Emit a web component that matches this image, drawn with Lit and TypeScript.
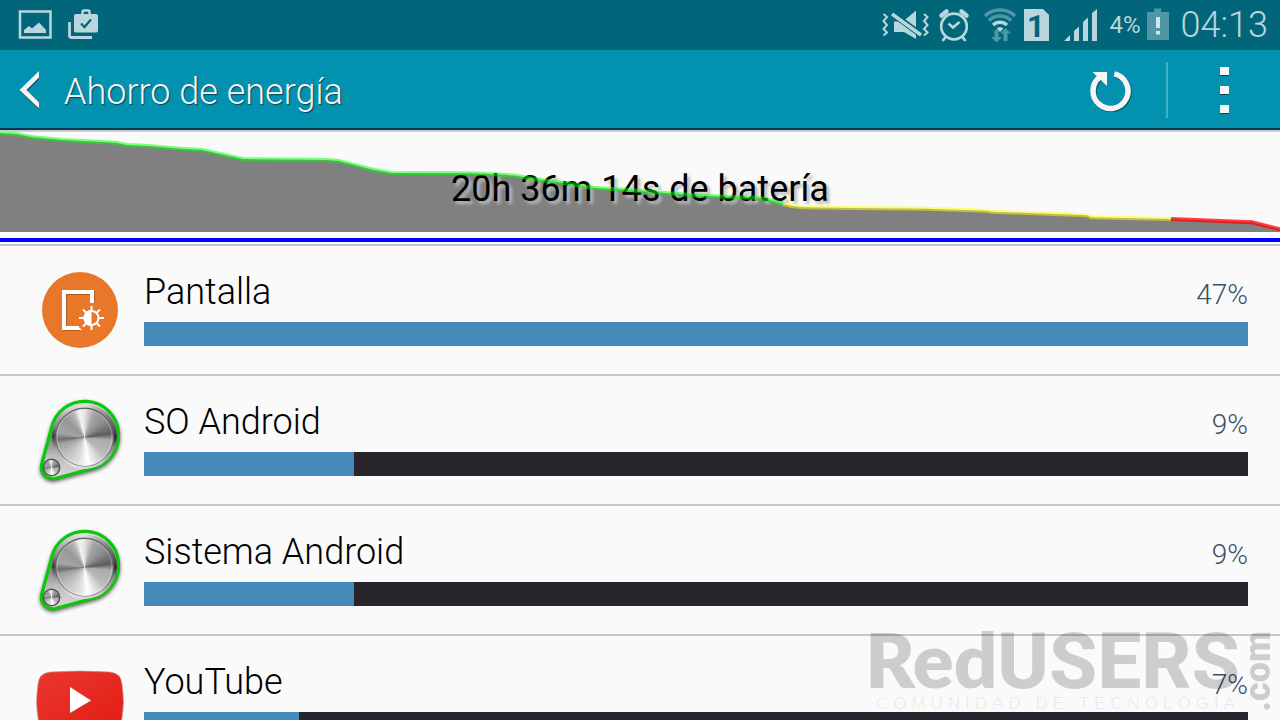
import { LitElement, html, css } from "lit";
import { customElement } from "lit/decorators.js";

interface Usage {
  name: string;
  percent: number;
  fill: number;
  icon: "display" | "system" | "video";
}

const USAGES: Usage[] = [
  { name: "Pantalla", percent: 47, fill: 100, icon: "display" },
  { name: "SO Android", percent: 9, fill: 19, icon: "system" },
  { name: "Sistema Android", percent: 9, fill: 19, icon: "system" },
  { name: "YouTube", percent: 7, fill: 14, icon: "video" },
];

const GOOD =
  "0,1 16,2 33,5.3 63,8 116,10.7 127,13 149,14 180,16.7 202,18 243,27 327,28 339,29 371,37.3 391,41 469,41.3 494,42.3 516,43.7 535,47.3 563,50.7 592,55.7 624,57.7 656,60.3 701,63.7 758,66 767,67.3 783,72";
const LOW =
  "783,72 792,74 803,75.3 852,76 926,76.7 987,78.7 992,79.7 1087,83.3 1091,85.3 1171,87";
const CRITICAL = "1171,87 1252,90.3 1280,97.3";

@customElement("usage-icon")
class UsageIcon extends LitElement {
  static properties = { kind: { type: String } };
  declare kind: string;

  static styles = css`
    :host { display: block; }
    svg { display: block; width: 96px; height: 96px; }
    .steel, .rim {
      border-radius: 50%;
      width: 100%; height: 100%;
    }
    .steel {
      background: conic-gradient(#e4e4e4 0deg, #a4a4a4 22deg, #8e8e8e 50deg, #5c5c5c 82deg, #acacac 96deg, #b8b8b8 130deg, #ffffff 172deg, #dcdcdc 195deg, #bcbcbc 230deg, #a0a0a0 255deg, #6e6e6e 266deg, #a4a4a4 280deg, #989898 315deg, #b4b4b4 335deg, #f4f4f4 348deg, #e4e4e4 360deg);
    }
    .rim {
      background: conic-gradient(#e2e2e2 0deg, #8a8a8a 45deg, #555 75deg, #2c2c2c 92deg, #888 110deg, #c8c8c8 150deg, #e6e6e6 200deg, #a8a8a8 245deg, #3c3c3c 270deg, #8a8a8a 290deg, #cfcfcf 330deg, #e2e2e2 360deg);
    }
  `;

  render() {
    if (this.kind === "display") {
      return html`<svg viewBox="32 262 96 96" aria-hidden="true">
        <circle cx="80" cy="310" r="38" fill="#e87729" />
        <path d="M93 303V293H65V329H80" fill="none" stroke="#8f4614" stroke-opacity=".6" stroke-width="4" />
        <path d="M92 303V292H64V328H79" fill="none" stroke="#fff" stroke-width="4" />
        <path d="M78 326l4 4h-4z" fill="#fff" />
        <g stroke="#fff" stroke-width="2" fill="none">
          <circle cx="91.5" cy="318" r="7" />
          <path d="M91.5 306v5M91.5 325v5M79 318h5M99 318h5M83 309.5l3.5 3.5M96.5 323l3.5 3.5M83 326.5l3.5-3.5M96.5 313l3.5-3.5" />
        </g>
        <path d="M91.5 310a8 8 0 0 0 0 16z" fill="#fff" />
      </svg>`;
    }
    if (this.kind === "video") {
      return html`<svg viewBox="32 652 96 96" aria-hidden="true">
        <defs>
          <linearGradient id="red" x1="0" y1="0" x2="1" y2="1">
            <stop offset="0" stop-color="#e8382f" />
            <stop offset="1" stop-color="#e41c14" />
          </linearGradient>
        </defs>
        <path d="M50 672Q80 670 110 672Q121 673 122 684Q125 702 122 718Q121 728 110 729Q80 731 50 729Q39 728 38 718Q35 702 38 684Q39 673 50 672Z" fill="url(#red)" stroke="#c9a09c" stroke-width=".6" />
        <path d="M70 687L91 700.5L70 713Z" fill="#fff" />
      </svg>`;
    }
    return html`<svg viewBox="32 392 96 96" aria-hidden="true">
      <defs>
        <filter id="soft" x="-20%" y="-20%" width="140%" height="140%">
          <feGaussianBlur stdDeviation="2.2" />
        </filter>
        <linearGradient id="plate" x1="0" y1="0" x2="0" y2="1">
          <stop offset="0" stop-color="#eee" />
          <stop offset=".45" stop-color="#777" />
          <stop offset=".7" stop-color="#bbb" />
          <stop offset="1" stop-color="#ddd" />
        </linearGradient>
      </defs>
      <path d="M51.500 428A34 34 0 1 1 92 468.500L55 478.500A11.500 11.500 0 0 1 41.500 465Z" fill="#000" stroke="#000" stroke-width="2" opacity=".7" filter="url(#soft)" transform="translate(0 2)" />
      <path d="M51.500 428A34 34 0 1 1 92 468.500L55 478.500A11.500 11.500 0 0 1 41.500 465Z" fill="url(#plate)" stroke="#0ac80a" stroke-width="3.200" stroke-linejoin="round" />
      <foreignObject x="52" y="404" width="65" height="65"><div class="rim"></div></foreignObject>
      <circle cx="84.500" cy="437" r="29.500" fill="#666" />
      <foreignObject x="56" y="408.500" width="57" height="57"><div class="steel"></div></foreignObject>
      <circle cx="84.500" cy="437" r="27.500" fill="none" stroke="#fff" stroke-opacity=".3" />
      <circle cx="51.500" cy="467.500" r="9" fill="#555" />
      <foreignObject x="44" y="460" width="15" height="15"><div class="steel"></div></foreignObject>
    </svg>`;
  }
}

@customElement("app-root")
class AppRoot extends LitElement {
  static styles = css`
    :host {
      display: flex; flex-direction: column; position: relative;
      height: 100vh; overflow: hidden;
      background: #fafafa; color: #000;
      font-family: Roboto, sans-serif; font-weight: 300;
    }
    svg { display: block; flex: none; }
    .status {
      display: flex; justify-content: space-between;
      height: 50px; flex: none; padding: 0 12px 0 16px;
      background: #01667a; color: #b8d6dd;
    }
    .group { display: flex; align-items: center; gap: 4px; }
    .charge { font-size: 24px; font-weight: 400; width: 30px; }
    .clock { font-size: 36px; padding-left: 1px; }
    .appbar {
      display: flex; align-items: center; height: 77px; flex: none;
      background: #0391b0; border-bottom: 1px solid #1f86b0;
      box-shadow: 0 2px #07384f;
      margin-bottom: 2px; color: #f5f5f5;
    }
    h1 {
      margin: 0; padding-top: 6px; flex: 1;
      font-size: 36px; line-height: 44px; font-weight: 300;
      text-shadow: 1px 1px 1px rgba(0, 40, 50, .7);
    }
    button { border: 0; padding: 0; background: none; color: inherit; cursor: pointer; }
    .divider { width: 2px; height: 56px; margin-top: 2px; background: #44acc4; }
    .chart {
      display: grid; align-items: center; flex: none;
      border-top: 2px solid #c6ced6; border-bottom: 6px solid #fdfdfd;
    }
    .chart > * { grid-area: 1 / 1; }
    .chart svg { width: 100%; height: 100px; }
    .remaining {
      margin: 0; padding-top: 14px; text-align: center;
      font-size: 36px; line-height: 44px; font-weight: 400;
      text-shadow: 3px 3px 3px #bbb;
    }
    .rule { flex: none; height: 4px; background: #00f; border-bottom: 2px solid #fff; }
    ul { list-style: none; margin: 0; padding: 0; }
    li {
      display: grid; grid-template-columns: 144px 1fr auto;
      grid-template-rows: 52px 24px; align-content: start;
      border-top: 2px solid #bec9d3; padding: 24px 32px 28px 0;
    }
    usage-icon { grid-row: 1 / 3; margin: -8px 0 -12px 32px; height: 96px; }
    .name { font-size: 36px; line-height: 44px; }
    .percent { font-size: 28px; line-height: 50px; color: #3a506a; }
    .track { grid-column: 2 / 4; background: #28262c; }
    .fill { height: 24px; background: #458ab8; }
    .mark {
      position: absolute; right: 10px; bottom: 8px;
      display: flex; align-items: end; gap: 6px;
      color: rgba(0, 0, 0, .18); pointer-events: none;
    }
    .brand { display: flex; align-items: baseline; justify-content: end; }
    .red { font: 800 76px/60px Lato, sans-serif; }
    .users { font: 800 78px/60px Roboto, sans-serif; }
    .motto { margin: 0; text-align: right; font: 400 17px/16px "Liberation Sans", sans-serif; letter-spacing: 5px; color: rgba(0, 0, 0, .07); padding-top: 4px; }
    .com { writing-mode: vertical-rl; transform: rotate(180deg); font: 900 36px/24px Roboto, sans-serif; }
  `;

  private statusLeft() {
    return html`<div class="group">
      <svg width="40" height="50" viewBox="16 0 40 50" aria-label="Imagen">
        <rect x="20" y="11.500" width="30.500" height="26" fill="none" stroke="#b8d6dd" stroke-width="2.500" />
        <path d="M24 33V30L29 26L32 28.500L39 22.500L46 30V33Z" fill="#b8d6dd" />
      </svg>
      <svg width="40" height="50" viewBox="60 0 40 50" aria-label="Play Store">
        <path d="M69.500 22V35.500Q69.500 37.500 71.500 37.500H92" fill="none" stroke="#b8d6dd" stroke-width="2.800" />
        <path d="M82.500 15V12Q82.500 10.500 84 10.500H88Q89.500 10.500 89.500 12V15" fill="none" stroke="#b8d6dd" stroke-width="2.500" />
        <path d="M76 14H96Q98 14 98 16V30.500Q98 32.500 96 32.500H76Q74 32.500 74 30.500V16Q74 14 76 14Z" fill="#b8d6dd" />
        <path d="M81 23.500L84.500 27L91 19.500" fill="none" stroke="#01667a" stroke-width="2.300" />
      </svg>
    </div>`;
  }

  private statusRight() {
    return html`<div class="group">
      <svg width="50" height="50" viewBox="882 0 50 50" aria-label="Silencio">
        <g fill="none" stroke="#b8d6dd" stroke-width="2">
          <path d="M883.500 14L887 17L883.500 21L887 25L883.500 29L887 32.500L883.500 35.500" />
          <path d="M924 14L927.500 17L924 21L927.500 25L924 29L927.500 32.500L924 35.500" />
        </g>
        <path d="M894 21.500H903L916 10.500V39L904 32H894Z" fill="#b8d6dd" />
        <path d="M891 12.500L922 35.500" stroke="#01667a" stroke-width="6" />
        <path d="M892 14L921 35" stroke="#b8d6dd" stroke-width="3.400" />
      </svg>
      <svg width="36" height="50" viewBox="936 0 36 50" aria-label="Alarma">
        <g fill="none" stroke="#b8d6dd" stroke-width="2.700">
          <circle cx="954" cy="26.500" r="12.800" />
          <path d="M948.500 23.500L953 27.500L959.500 22" />
          <path d="M945.500 37L942.500 41M962.500 37L965.500 41" />
        </g>
        <path d="M941.500 15.500L946.500 11.500M966.500 15.500L961.500 11.500" fill="none" stroke="#b8d6dd" stroke-width="4.500" stroke-linecap="round" />
      </svg>
      <svg width="42" height="50" viewBox="976 0 42 50" aria-label="Wi-Fi">
        <g fill="none" stroke="#4f97a6" stroke-width="3.500">
          <path d="M985 16A22 22 0 0 1 1015 16" />
          <path d="M989 20.500A16 16 0 0 1 1011 20.500" />
        </g>
        <path d="M993 25A10 10 0 0 1 1007 25" fill="none" stroke="#b8d6dd" stroke-width="3.500" />
        <path d="M996.500 28.500Q1000 25.500 1003.500 28.500L1000 32Z" fill="#b8d6dd" />
        <path d="M994.500 30h4v7h3.500L996.500 42.500L991 37H994.500ZM1003.500 41h4V33.500h3.500L1005.500 28L1000.500 33.500h3Z" fill="#4f97a6" />
      </svg>
      <svg width="32" height="50" viewBox="1022 0 32 50" aria-label="SIM 1">
        <path d="M1024 9H1043L1049 15V41H1024Z" fill="#b8d6dd" />
        <text x="1036" y="37" text-anchor="middle" font-family="Roboto" font-weight="700" font-size="31" fill="#01667a">1</text>
      </svg>
      <svg width="48" height="50" viewBox="1058 0 48 50" aria-label="Cobertura">
        <path d="M1064 41L1070 35V41ZM1074 41V31L1079 26.500V41ZM1083 41V22L1088 17.500V41ZM1092 41V13L1097 9V41Z" fill="#b8d6dd" />
      </svg>
      <span class="charge">4%</span>
      <svg width="32" height="50" viewBox="1144 0 32 50" aria-label="Batería baja">
        <path d="M1147 12H1154V8.500H1161V12H1169V40H1147Z" fill="#4f97a6" />
        <path d="M1156 17H1160V28H1156ZM1156 31H1160V34.500H1156Z" fill="#cfe6ea" />
      </svg>
      <span class="clock">04:13</span>
    </div>`;
  }

  render() {
    const area = `0,100 ${GOOD} ${LOW} ${CRITICAL} 1280,100`;
    return html`
      <header class="status">${this.statusLeft()}${this.statusRight()}</header>
      <nav class="appbar">
        <button aria-label="Atrás">
          <svg width="64" height="77" viewBox="0 50 64 77">
            <path d="M39 72.500V79L27 91L39 103V109.500L20 91Z" fill="#06303c" opacity=".8" />
            <path d="M39 71V77.500L26.500 90L39 102.500V108.500L19.500 90Z" fill="#f5f5f5" />
          </svg>
        </button>
        <h1>Ahorro de energía</h1>
        <button aria-label="Actualizar">
          <svg width="112" height="77" viewBox="1054 50 112 77">
            <path d="M1115.500 75A17.500 17.500 0 1 1 1101 78" fill="none" stroke="#06303c" stroke-opacity=".6" stroke-width="5.500" />
            <path d="M1114.300 73.900A17.500 17.500 0 1 1 1100 77" fill="none" stroke="#f5f5f5" stroke-width="5.500" />
            <path d="M1092.500 72H1107V86Z" fill="#f5f5f5" />
          </svg>
        </button>
        <div class="divider"></div>
        <button aria-label="Más opciones">
          <svg width="112" height="77" viewBox="1168 50 112 77">
            <path d="M1220 68h9v8h-9zM1220 87h9v8h-9zM1220 106h9v8h-9z" fill="#07485a" />
            <path d="M1220 67h9v8h-9zM1220 86h9v8h-9zM1220 105h9v8h-9z" fill="#f5f5f5" />
          </svg>
        </button>
      </nav>
      <section class="chart">
        <svg viewBox="0 0 1280 100" preserveAspectRatio="none" aria-hidden="true">
          <polygon points=${area} fill="#808080" />
        </svg>
        <p class="remaining">20h 36m 14s de batería</p>
        <svg viewBox="0 0 1280 100" preserveAspectRatio="none" aria-hidden="true">
          <g fill="none" stroke-width="4">
            <polyline points=${GOOD} stroke="#00ff00" stroke-opacity=".5" />
            <polyline points=${LOW} stroke="#ffff00" stroke-opacity=".5" />
            <polyline points=${CRITICAL} stroke="#ff0000" stroke-opacity=".75" />
          </g>
        </svg>
      </section>
      <div class="rule"></div>
      <ul>
        ${USAGES.map(
          (u) => html`<li>
            <usage-icon kind=${u.icon}></usage-icon>
            <span class="name">${u.name}</span>
            <span class="percent">${u.percent}%</span>
            <div class="track"><div class="fill" style="width:${u.fill}%"></div></div>
          </li>`
        )}
      </ul>
      <aside class="mark">
        <div>
          <div class="brand"><span class="red">Red</span><span class="users">USERS</span></div>
          <p class="motto">COMUNIDAD DE TECNOLOGIA</p>
        </div>
        <span class="com">.com</span>
      </aside>
    `;
  }
}
